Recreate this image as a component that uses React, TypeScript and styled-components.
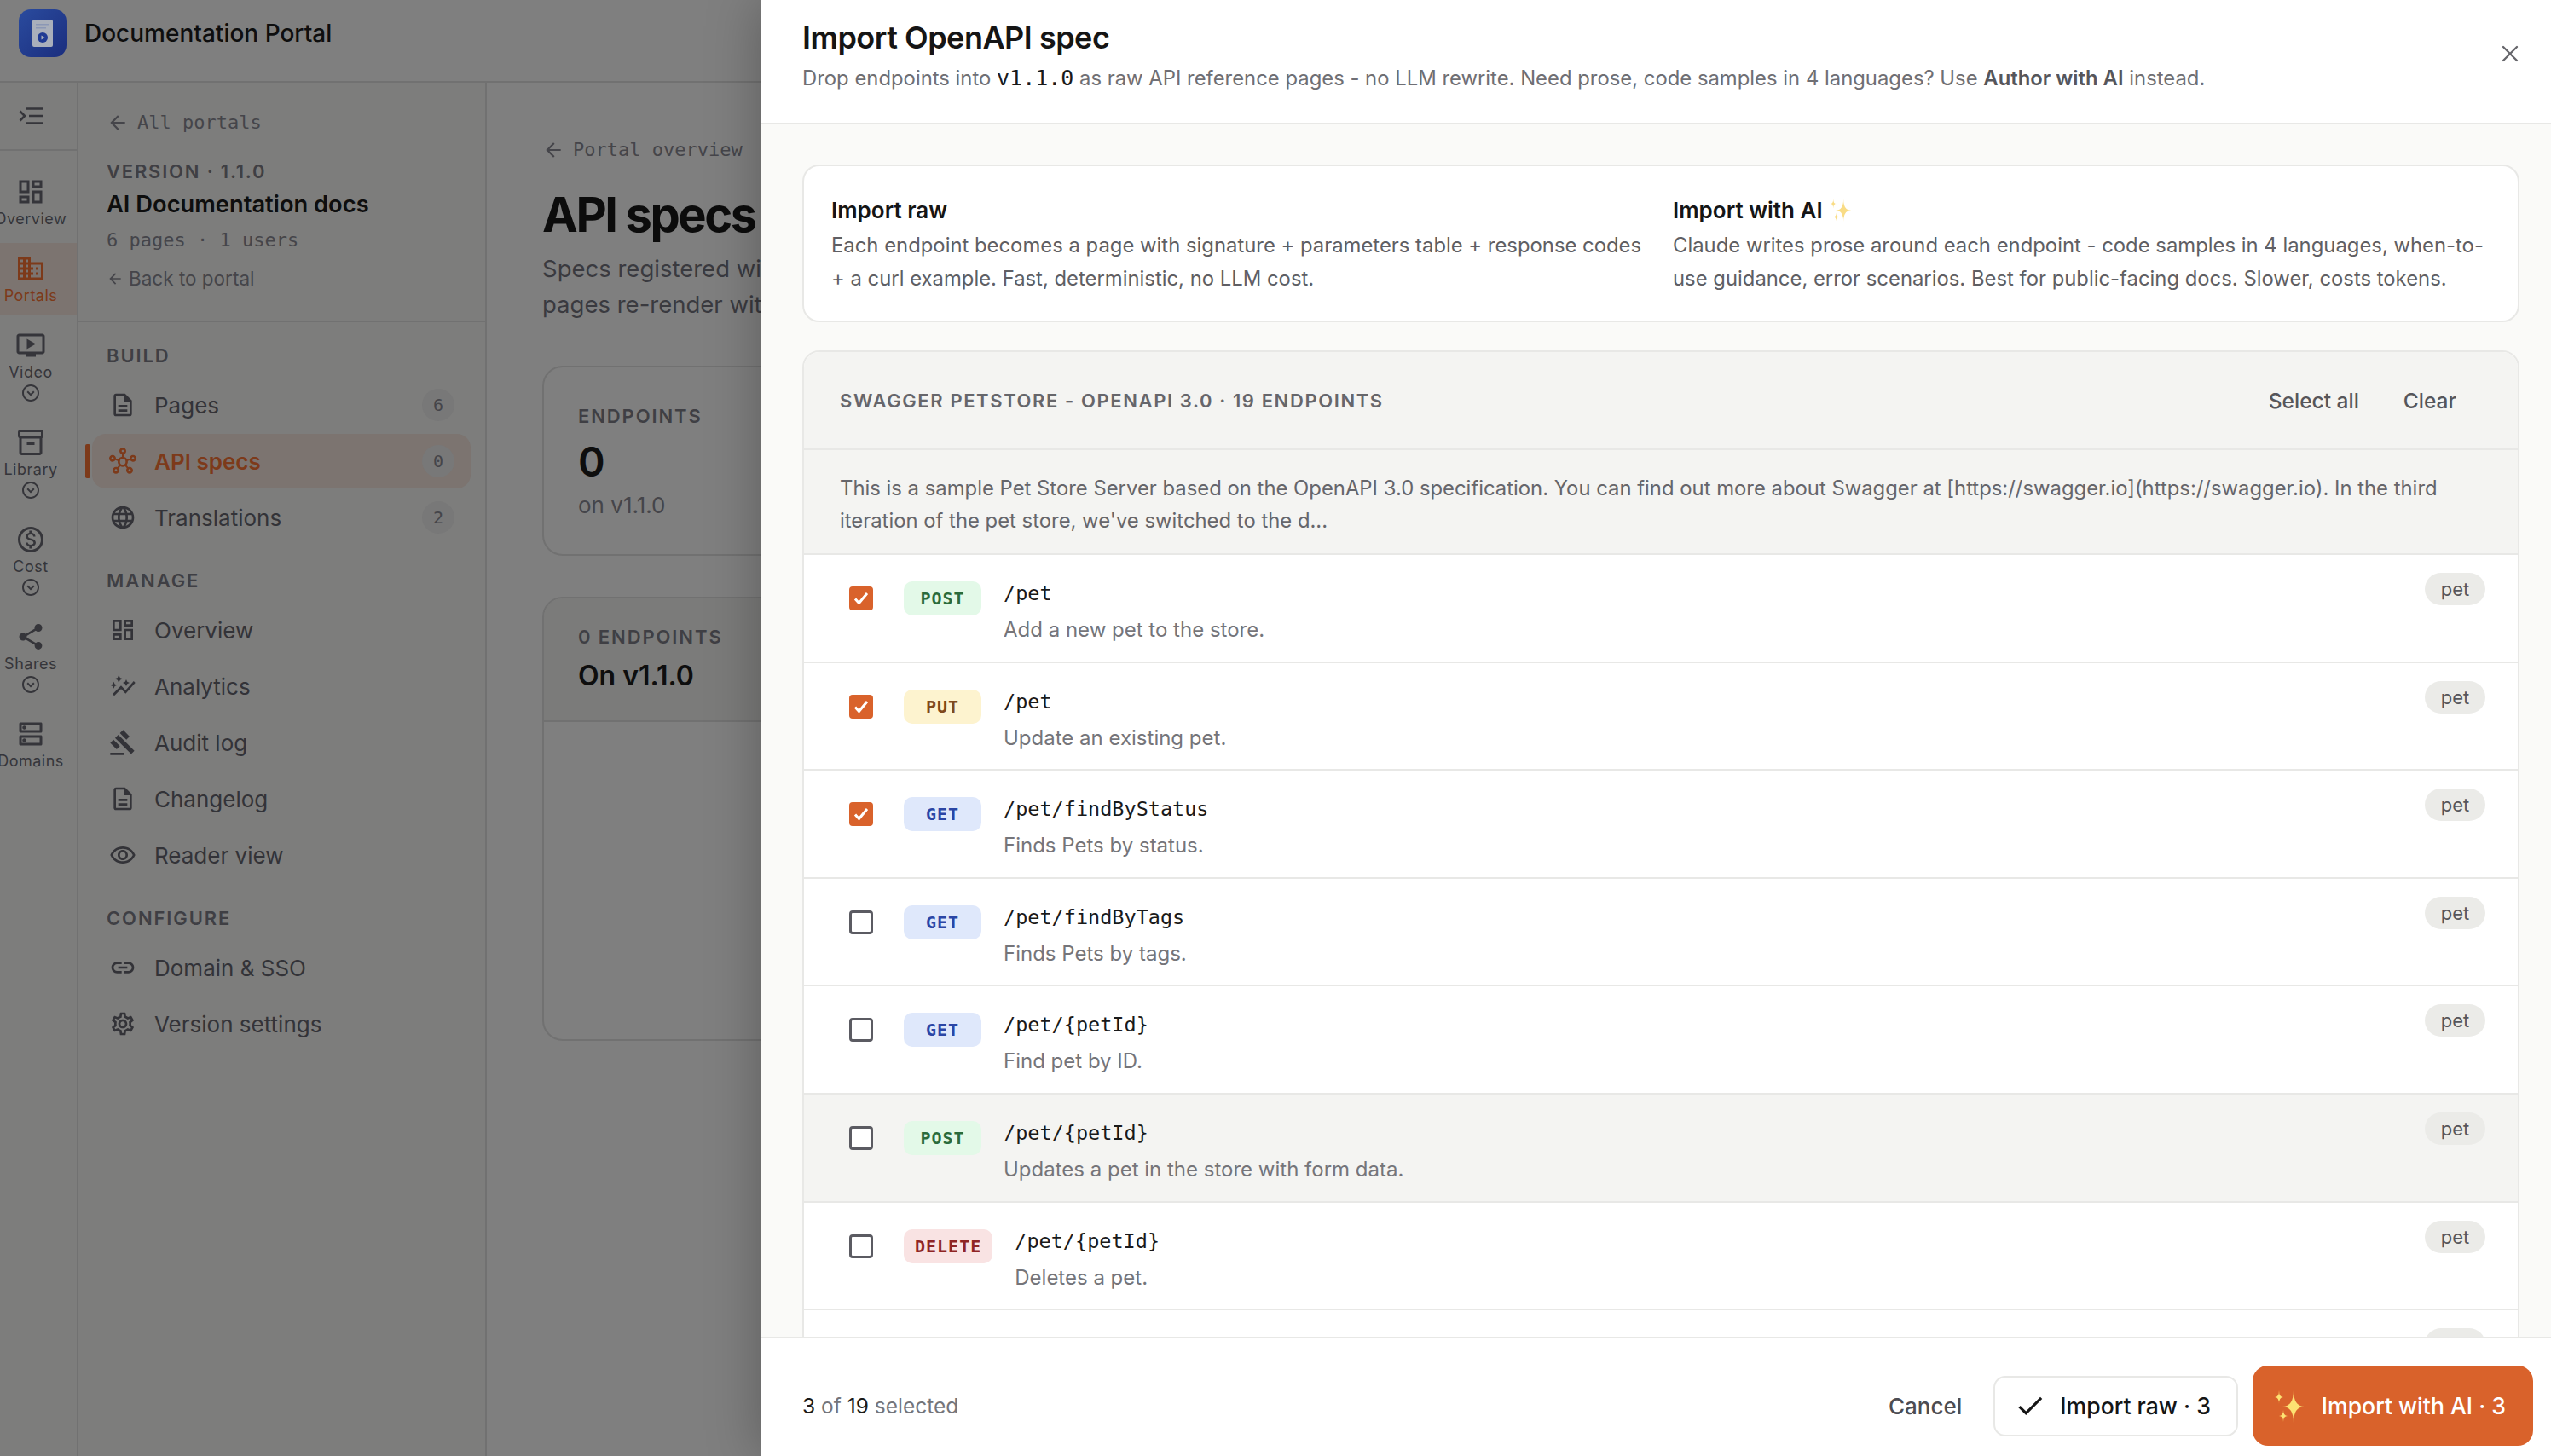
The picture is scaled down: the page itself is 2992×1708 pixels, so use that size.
import styled, { createGlobalStyle } from "styled-components"
import {
    MdArrowBack, MdCheck, MdDomain, MdOutlineAutoGraph, MdOutlineDashboard, MdOutlineDescription,
    MdOutlineDns, MdOutlineExpandCircleDown, MdOutlineGavel, MdOutlineHub, MdOutlineInventory2,
    MdOutlineLanguage, MdOutlineLink, MdOutlineMonetizationOn, MdOutlineOndemandVideo,
    MdOutlineRemoveRedEye, MdOutlineSettings, MdShare,
} from "react-icons/md"
import { X } from "lucide-react"
import type { ComponentType } from "react"

type Icon = ComponentType<{ size?: number }>
type Method = "POST" | "PUT" | "GET" | "DELETE"

const SANS = `Inter, "Liberation Sans", sans-serif`
const MONO = `"DejaVu Sans Mono", "Liberation Mono", monospace`

const railItems: { label: string; icon: Icon; active?: boolean; more?: boolean }[] = [
    { label: "Overview", icon: MdOutlineDashboard },
    { label: "Portals", icon: MdDomain, active: true },
    { label: "Video", icon: MdOutlineOndemandVideo, more: true },
    { label: "Library", icon: MdOutlineInventory2, more: true },
    { label: "Cost", icon: MdOutlineMonetizationOn, more: true },
    { label: "Shares", icon: MdShare, more: true },
    { label: "Domains", icon: MdOutlineDns },
]

const navSections: { title: string; items: { label: string; icon: Icon; count?: string; active?: boolean }[] }[] = [
    {
        title: "BUILD",
        items: [
            { label: "Pages", icon: MdOutlineDescription, count: "6" },
            { label: "API specs", icon: MdOutlineHub, count: "0", active: true },
            { label: "Translations", icon: MdOutlineLanguage, count: "2" },
        ],
    },
    {
        title: "MANAGE",
        items: [
            { label: "Overview", icon: MdOutlineDashboard },
            { label: "Analytics", icon: MdOutlineAutoGraph },
            { label: "Audit log", icon: MdOutlineGavel },
            { label: "Changelog", icon: MdOutlineDescription },
            { label: "Reader view", icon: MdOutlineRemoveRedEye },
        ],
    },
    {
        title: "CONFIGURE",
        items: [
            { label: "Domain & SSO", icon: MdOutlineLink },
            { label: "Version settings", icon: MdOutlineSettings },
        ],
    },
]

const endpoints: { method: Method; path: string; desc: string; checked?: boolean; hover?: boolean }[] = [
    { method: "POST", path: "/pet", desc: "Add a new pet to the store.", checked: true },
    { method: "PUT", path: "/pet", desc: "Update an existing pet.", checked: true },
    { method: "GET", path: "/pet/findByStatus", desc: "Finds Pets by status.", checked: true },
    { method: "GET", path: "/pet/findByTags", desc: "Finds Pets by tags." },
    { method: "GET", path: "/pet/{petId}", desc: "Find pet by ID." },
    { method: "POST", path: "/pet/{petId}", desc: "Updates a pet in the store with form data.", hover: true },
    { method: "DELETE", path: "/pet/{petId}", desc: "Deletes a pet." },
    { method: "POST", path: "/pet/{petId}/uploadImage", desc: "Uploads an image." },
]

const methodColors: Record<Method, { bg: string; fg: string }> = {
    POST: { bg: "#e3f9e8", fg: "#2a6b3c" },
    PUT: { bg: "#fdf3cf", fg: "#80491c" },
    GET: { bg: "#dfe8fb", fg: "#2b46a6" },
    DELETE: { bg: "#f9e3e3", fg: "#8f2525" },
}

function star(x: number, y: number, w: number, h: number) {
    return `M${x} ${y - h}Q${x} ${y} ${x + w} ${y}Q${x} ${y} ${x} ${y + h}Q${x} ${y} ${x - w} ${y}Q${x} ${y} ${x} ${y - h}Z`
}

function Sparkles({ size, color }: { size: number; color: string }) {
    return (
        <svg width={size} height={size} viewBox="0 0 40 40" fill={color}>
            <path d={star(23, 21, 13, 19)} />
            <path d={star(6, 10, 5, 8)} />
            <path d={star(11, 32, 5, 7)} />
        </svg>
    )
}

export default function App() {
    return (
        <Page>
            <GlobalStyle />
            <TopBar>
                <svg width="56" height="56" viewBox="0 0 56 56">
                    <defs>
                        <linearGradient id="logo" x1="0" y1="0" x2="1" y2="1">
                            <stop offset="0" stopColor="#2a4b9e" />
                            <stop offset="1" stopColor="#1b2e7e" />
                        </linearGradient>
                    </defs>
                    <rect width="56" height="56" rx="14" fill="url(#logo)" />
                    <rect x="16" y="12" width="24" height="32" rx="2" fill="#a9afbb" />
                    <rect x="20" y="17" width="16" height="1.5" fill="#8b97b5" />
                    <rect x="20" y="21" width="12" height="1.5" fill="#8b97b5" />
                    <circle cx="28" cy="33" r="6" fill="#1f3a94" />
                    <path d="M26.5 30.5v5l4-2.5z" fill="#a9afbb" />
                </svg>
                <AppName>Documentation Portal</AppName>
            </TopBar>
            <Shell>
                <Rail>
                    <RailTop>
                        <svg width="28" height="20" viewBox="0 0 28 20" fill="none" stroke="currentColor" strokeWidth="2.6">
                            <path d="M9 1.5h19M12 10h16M9 18.500h19" />
                            <path d="M1.500 4.500 7 10l-5.500 5.500" />
                        </svg>
                    </RailTop>
                    <RailList>
                        {railItems.map((item) => (
                            <RailItem key={item.label} $active={item.active}>
                                <item.icon size={36} />
                                <RailLabel>{item.label}</RailLabel>
                                {item.more && <MdOutlineExpandCircleDown size={24} />}
                            </RailItem>
                        ))}
                    </RailList>
                </Rail>
                <Sidebar>
                    <SideHead>
                        <BackLink><MdArrowBack size={26} />All portals</BackLink>
                        <VersionLabel>VERSION · 1.1.0</VersionLabel>
                        <PortalName>AI Documentation docs</PortalName>
                        <PortalMeta>6 pages · 1 users</PortalMeta>
                        <BackToPortal><MdArrowBack size={20} />Back to portal</BackToPortal>
                    </SideHead>
                    <SideNav>
                        {navSections.map((section) => (
                            <NavSection key={section.title}>
                                <SectionLabel>{section.title}</SectionLabel>
                                {section.items.map((item) => (
                                    <NavRow key={item.label} $active={item.active}>
                                        <item.icon size={32} />
                                        <NavLabel>{item.label}</NavLabel>
                                        {item.count && <NavCount>{item.count}</NavCount>}
                                    </NavRow>
                                ))}
                            </NavSection>
                        ))}
                    </SideNav>
                </Sidebar>
                <Main>
                    <BackLink><MdArrowBack size={26} />Portal overview</BackLink>
                    <PageTitle>API specs</PageTitle>
                    <PageSub>Specs registered with this version appear as reference<br />pages re-render with each import</PageSub>
                    <StatCard>
                        <StatLabel>ENDPOINTS</StatLabel>
                        <StatValue>0</StatValue>
                        <StatNote>on v1.1.0</StatNote>
                    </StatCard>
                    <ListCard>
                        <ListCardHead>
                            <StatLabel>0 ENDPOINTS</StatLabel>
                            <ListCardTitle>On v1.1.0</ListCardTitle>
                        </ListCardHead>
                    </ListCard>
                </Main>
            </Shell>

            <Drawer>
                <DrawerHead>
                    <div>
                        <DrawerTitle>Import OpenAPI spec</DrawerTitle>
                        <DrawerSub>
                            Drop endpoints into <code>v1.1.0</code> as raw API reference pages - no LLM rewrite. Need prose, code samples in 4 languages? Use <b>Author with AI</b> instead.
                        </DrawerSub>
                    </div>
                    <CloseButton><X size={32} strokeWidth={1.75} /></CloseButton>
                </DrawerHead>
                <DrawerBody>
                    <InfoCard>
                        <div>
                            <InfoTitle>Import raw</InfoTitle>
                            <InfoText>Each endpoint becomes a page with signature + parameters table + response codes + a curl example. Fast, deterministic, no LLM cost.</InfoText>
                        </div>
                        <div>
                            <InfoTitle>Import with AI <Sparkles size={28} color="#f9dc85" /></InfoTitle>
                            <InfoText>Claude writes prose around each endpoint - code samples in 4 languages, when-to-use guidance, error scenarios. Best for public-facing docs. Slower, costs tokens.</InfoText>
                        </div>
                    </InfoCard>
                    <Panel>
                        <PanelHead>
                            <PanelTitle>SWAGGER PETSTORE - OPENAPI 3.0 · 19 ENDPOINTS</PanelTitle>
                            <PanelActions>
                                <TextButton>Select all</TextButton>
                                <TextButton>Clear</TextButton>
                            </PanelActions>
                        </PanelHead>
                        <PanelDesc>
                            This is a sample Pet Store Server based on the OpenAPI 3.0 specification. You can find out more about Swagger at [https://swagger.io](https://swagger.io). In the third iteration of the pet store, we've switched to the d...
                        </PanelDesc>
                        {endpoints.map((ep, i) => (
                            <Row key={i} $hover={ep.hover}>
                                <Check $checked={ep.checked}>
                                    {ep.checked && (
                                        <svg width="20" height="20" viewBox="0 0 20 20" fill="none" stroke="#fff" strokeWidth="3">
                                            <path d="M3 10.500l4.500 5L17 4" />
                                        </svg>
                                    )}
                                </Check>
                                <MethodBadge $method={ep.method}>{ep.method}</MethodBadge>
                                <RowText>
                                    <RowPath>{ep.path}</RowPath>
                                    <RowDesc>{ep.desc}</RowDesc>
                                </RowText>
                                <TagPill>pet</TagPill>
                            </Row>
                        ))}
                    </Panel>
                </DrawerBody>
                <DrawerFoot>
                    <Selected><b>3</b> of <b>19</b> selected</Selected>
                    <FootActions>
                        <CancelButton>Cancel</CancelButton>
                        <RawButton><MdCheck size={38} />Import raw · 3</RawButton>
                        <AiButton><Sparkles size={40} color="#fde272" />Import with AI · 3</AiButton>
                    </FootActions>
                </DrawerFoot>
            </Drawer>
        </Page>
    )
}

const GlobalStyle = createGlobalStyle`
    html, body {
        margin: 0;
        padding: 0;
        background: #7f7f7f;
    }
    * {
        box-sizing: border-box;
    }
`

const Page = styled.div`
    position: relative;
    width: 2992px;
    height: 1708px;
    overflow: hidden;
    background: #7f7f7f;
    font-family: ${SANS};
    color: #0e0e0e;
`

const TopBar = styled.header`
    height: 97px;
    padding: 11px 0 0 22px;
    display: flex;
    align-items: flex-start;
    gap: 21px;
    border-bottom: 2px solid #717171;
`

const AppName = styled.div`
    font-size: 28px;
    line-height: 56px;
    font-weight: 500;
`

const Shell = styled.div`
    display: flex;
    height: 1611px;
`

const Rail = styled.nav`
    width: 92px;
    flex-shrink: 0;
    background: #7d7d7c;
    border-right: 2px solid #717171;
    color: #35353a;
`

const RailTop = styled.div`
    height: 80px;
    padding-right: 18px;
    display: flex;
    align-items: center;
    justify-content: center;
    border-bottom: 2px solid #717171;
`

const RailList = styled.div`
    padding-top: 18px;
    display: flex;
    flex-direction: column;
    gap: 6px;
`

const RailItem = styled.div<{ $active?: boolean }>`
    display: flex;
    flex-direction: column;
    align-items: center;
    padding: 12px 18px 10px 0;
    background: ${(p) => (p.$active ? "#7c7470" : "transparent")};
    color: ${(p) => (p.$active ? "#7d3a1a" : "inherit")};
`

const RailLabel = styled.span`
    margin-top: 3px;
    margin-bottom: 1px;
    font-size: 18px;
    line-height: 22px;
    letter-spacing: 0.5px;
    white-space: nowrap;
`

const Sidebar = styled.aside`
    width: 479px;
    flex-shrink: 0;
    background: #7d7d7c;
    border-right: 2px solid #717171;
    color: #333338;
`

const SideHead = styled.div`
    padding: 32px 0 34px 33px;
    border-bottom: 2px solid #717171;
`

const BackLink = styled.div`
    display: flex;
    align-items: center;
    gap: 10px;
    font-family: ${MONO};
    font-size: 22px;
    line-height: 30px;
    color: #45454a;

    svg {
        flex-shrink: 0;
    }
`

const VersionLabel = styled.div`
    margin-top: 28px;
    font-size: 22px;
    line-height: 28px;
    font-weight: 600;
    letter-spacing: 1.8px;
    color: #3f3f44;
`

const PortalName = styled.div`
    margin-top: 6px;
    font-size: 27.300px;
    line-height: 38px;
    font-weight: 600;
    color: #0e0e0e;
`

const PortalMeta = styled.div`
    margin-top: 8px;
    font-family: ${MONO};
    font-size: 22px;
    line-height: 30px;
    color: #45454a;
`

const BackToPortal = styled.div`
    margin-top: 15px;
    display: flex;
    align-items: center;
    gap: 6px;
    font-size: 22.500px;
    line-height: 30px;
    color: #45454a;
`

const SideNav = styled.div`
    padding: 25px 17px 0 16px;
    display: flex;
    flex-direction: column;
    gap: 28px;
`

const NavSection = styled.div`
    display: flex;
    flex-direction: column;
    gap: 2px;
`

const SectionLabel = styled.div`
    margin-left: 17px;
    margin-bottom: 10px;
    font-size: 22px;
    line-height: 28px;
    font-weight: 600;
    letter-spacing: 1.9px;
    color: #3f3f44;
`

const NavRow = styled.div<{ $active?: boolean }>`
    position: relative;
    height: 64px;
    padding: 0 19px 0 20px;
    display: flex;
    align-items: center;
    gap: 21px;
    border-radius: 16px;
    background: ${(p) => (p.$active ? "#7c7470" : "transparent")};
    color: ${(p) => (p.$active ? "#7d3a1a" : "#333338")};
    font-weight: ${(p) => (p.$active ? 600 : 400)};

    &::before {
        content: "";
        display: ${(p) => (p.$active ? "block" : "none")};
        position: absolute;
        left: -8px;
        top: 12px;
        width: 6px;
        height: 40px;
        border-radius: 2px;
        background: #7d3a1a;
    }
`

const NavLabel = styled.span`
    flex: 1;
    font-size: 26px;
`

const NavCount = styled.span`
    width: 38px;
    height: 38px;
    border-radius: 19px;
    display: flex;
    align-items: center;
    justify-content: center;
    background: #787878;
    font-family: ${MONO};
    font-size: 20px;
    font-weight: 400;
    color: #45454a;
`

const Main = styled.main`
    flex: 1;
    min-width: 0;
    padding: 64px 0 0 65px;
    overflow: hidden;
`

const PageTitle = styled.h1`
    margin: 25px 0 0;
    font-size: 56px;
    line-height: 72px;
    font-weight: 700;
    letter-spacing: -2.4px;
    white-space: nowrap;
    color: #0c0c0c;
`

const PageSub = styled.p`
    margin: 6px 0 0;
    font-size: 27.500px;
    line-height: 42px;
    white-space: nowrap;
    color: #3a3a3f;
`

const StatCard = styled.section`
    margin-top: 51px;
    width: 620px;
    height: 223px;
    padding: 43px 40px 0;
    border: 2px solid #717171;
    border-radius: 24px;
    background: #7f7f7f;
`

const StatLabel = styled.div`
    font-size: 22px;
    line-height: 28px;
    font-weight: 600;
    letter-spacing: 1.9px;
    color: #3f3f44;
`

const StatValue = styled.div`
    margin-top: 12px;
    font-size: 48px;
    line-height: 56px;
    font-weight: 600;
`

const StatNote = styled.div`
    margin-top: 8px;
    font-size: 26px;
    line-height: 30px;
    color: #45454a;
`

const ListCard = styled.section`
    margin-top: 48px;
    width: 900px;
    height: 521px;
    border: 2px solid #717171;
    border-radius: 24px;
    overflow: hidden;
`

const ListCardHead = styled.div`
    padding: 31px 40px 30px;
    background: #7b7b7a;
    border-bottom: 2px solid #717171;
`

const ListCardTitle = styled.div`
    margin-top: 10px;
    font-size: 32px;
    line-height: 44px;
    font-weight: 600;
`

const Drawer = styled.div`
    position: absolute;
    top: 0;
    right: 0;
    width: 2099px;
    height: 1708px;
    display: flex;
    flex-direction: column;
    overflow: hidden;
    background: #fff;
    box-shadow: 0 0 60px rgba(0, 0, 0, 0.28);
    color: #151515;
`

const DrawerHead = styled.div`
    height: 146px;
    flex-shrink: 0;
    padding: 20px 32px 0 48px;
    display: flex;
    justify-content: space-between;
    border-bottom: 2px solid #e8e8e6;
`

const DrawerTitle = styled.h2`
    margin: 0;
    font-size: 36px;
    line-height: 48px;
    font-weight: 600;
    letter-spacing: -0.5px;
`

const DrawerSub = styled.div`
    margin-top: 5px;
    font-size: 23.850px;
    line-height: 38px;
    color: #6f6f74;

    code {
        font-family: ${MONO};
        font-size: 25px;
        color: #1a1a1a;
    }

    b {
        font-weight: 600;
        color: #56565b;
    }
`

const CloseButton = styled.div`
    margin-top: 27px;
    height: 32px;
    color: #66666b;
`

const DrawerBody = styled.div`
    height: 1422px;
    flex-shrink: 0;
    padding: 47px 37px 0 48px;
    overflow: hidden;
    background: #fafaf8;
`

const InfoCard = styled.div`
    padding: 32px 32px 30px;
    display: grid;
    grid-template-columns: 1fr 1fr;
    gap: 28px;
    background: #fff;
    border: 2px solid #e8e8e6;
    border-radius: 20px;
`

const InfoTitle = styled.div`
    display: flex;
    align-items: center;
    gap: 8px;
    height: 38px;
    margin-bottom: 3px;
    font-size: 26px;
    font-weight: 600;
`

const InfoText = styled.div`
    font-size: 23.850px;
    line-height: 39px;
    color: #5f5f64;
`

const Panel = styled.section`
    margin-top: 33px;
    border: 2px solid #e8e8e6;
    border-radius: 20px 20px 0 0;
    overflow: hidden;
    background: #fff;
`

const PanelHead = styled.div`
    height: 115px;
    padding: 0 72px 0 42px;
    display: flex;
    align-items: center;
    justify-content: space-between;
    background: #f4f4f2;
    border-bottom: 2px solid #e8e8e6;
`

const PanelTitle = styled.div`
    font-size: 22px;
    font-weight: 600;
    letter-spacing: 1.6px;
    color: #66666b;
`

const PanelActions = styled.div`
    display: flex;
    gap: 52px;
`

const TextButton = styled.span`
    font-size: 24.500px;
    font-weight: 500;
    color: #56565b;
`

const PanelDesc = styled.div`
    padding: 26px 42px 19px;
    font-size: 23.850px;
    line-height: 38px;
    color: #66666b;
    background: #f4f4f2;
    border-bottom: 2px solid #e8e8e6;
`

const Row = styled.div<{ $hover?: boolean }>`
    padding: 22px 38px 0 53px;
    height: 126.600px;
    display: flex;
    align-items: flex-start;
    background: ${(p) => (p.$hover ? "#f4f4f2" : "#fff")};
    border-bottom: 2px solid #e8e8e6;
`

const Check = styled.span<{ $checked?: boolean }>`
    width: 28px;
    height: 28px;
    margin-top: 15px;
    margin-right: 36px;
    flex-shrink: 0;
    display: flex;
    align-items: center;
    justify-content: center;
    border-radius: 4px;
    border: ${(p) => (p.$checked ? "none" : "3px solid #5b5b62")};
    background: ${(p) => (p.$checked ? "#d9622b" : "#fff")};
`

const MethodBadge = styled.span<{ $method: Method }>`
    min-width: 91px;
    height: 40px;
    margin-top: 9px;
    padding: 0 13px;
    flex-shrink: 0;
    display: flex;
    align-items: center;
    justify-content: center;
    border-radius: 10px;
    font-family: ${MONO};
    font-size: 20px;
    font-weight: 700;
    letter-spacing: 1px;
    background: ${(p) => methodColors[p.$method].bg};
    color: ${(p) => methodColors[p.$method].fg};
`

const RowText = styled.div`
    flex: 1;
    margin-left: 26px;
`

const RowPath = styled.div`
    font-family: ${MONO};
    font-size: 23.500px;
    line-height: 47px;
    color: #1a1a1a;
`

const RowDesc = styled.div`
    font-size: 24px;
    line-height: 38px;
    color: #75757a;
`

const TagPill = styled.span`
    width: 71px;
    height: 38px;
    margin-top: -1px;
    flex-shrink: 0;
    display: flex;
    align-items: center;
    justify-content: center;
    border-radius: 19px;
    background: #ebebe8;
    font-size: 22px;
    color: #56565b;
`

const DrawerFoot = styled.div`
    height: 160px;
    flex-shrink: 0;
    padding: 0 21px 0 48px;
    display: flex;
    align-items: center;
    justify-content: space-between;
    background: #fff;
    border-top: 2px solid #e8e8e6;
`

const Selected = styled.div`
    font-size: 24.500px;
    color: #75757a;

    b {
        font-weight: 400;
        color: #1a1a1a;
    }
`

const FootActions = styled.div`
    display: flex;
    align-items: center;
    gap: 17px;
`

const CancelButton = styled.span`
    padding: 0 20px 0 22px;
    font-size: 26px;
    font-weight: 500;
    color: #4c4c52;
`

const RawButton = styled.span`
    height: 71px;
    padding: 0 30px 0 22px;
    display: flex;
    align-items: center;
    gap: 16px;
    border: 2px solid #e8e8e6;
    border-radius: 14px;
    font-size: 26.600px;
    font-weight: 500;
    color: #151515;
`

const AiButton = styled.span`
    height: 94px;
    padding: 0 32px 0 25px;
    display: flex;
    align-items: center;
    gap: 16px;
    border-radius: 18px;
    background: #d9622b;
    font-size: 26.600px;
    font-weight: 500;
    color: #fff;
`
